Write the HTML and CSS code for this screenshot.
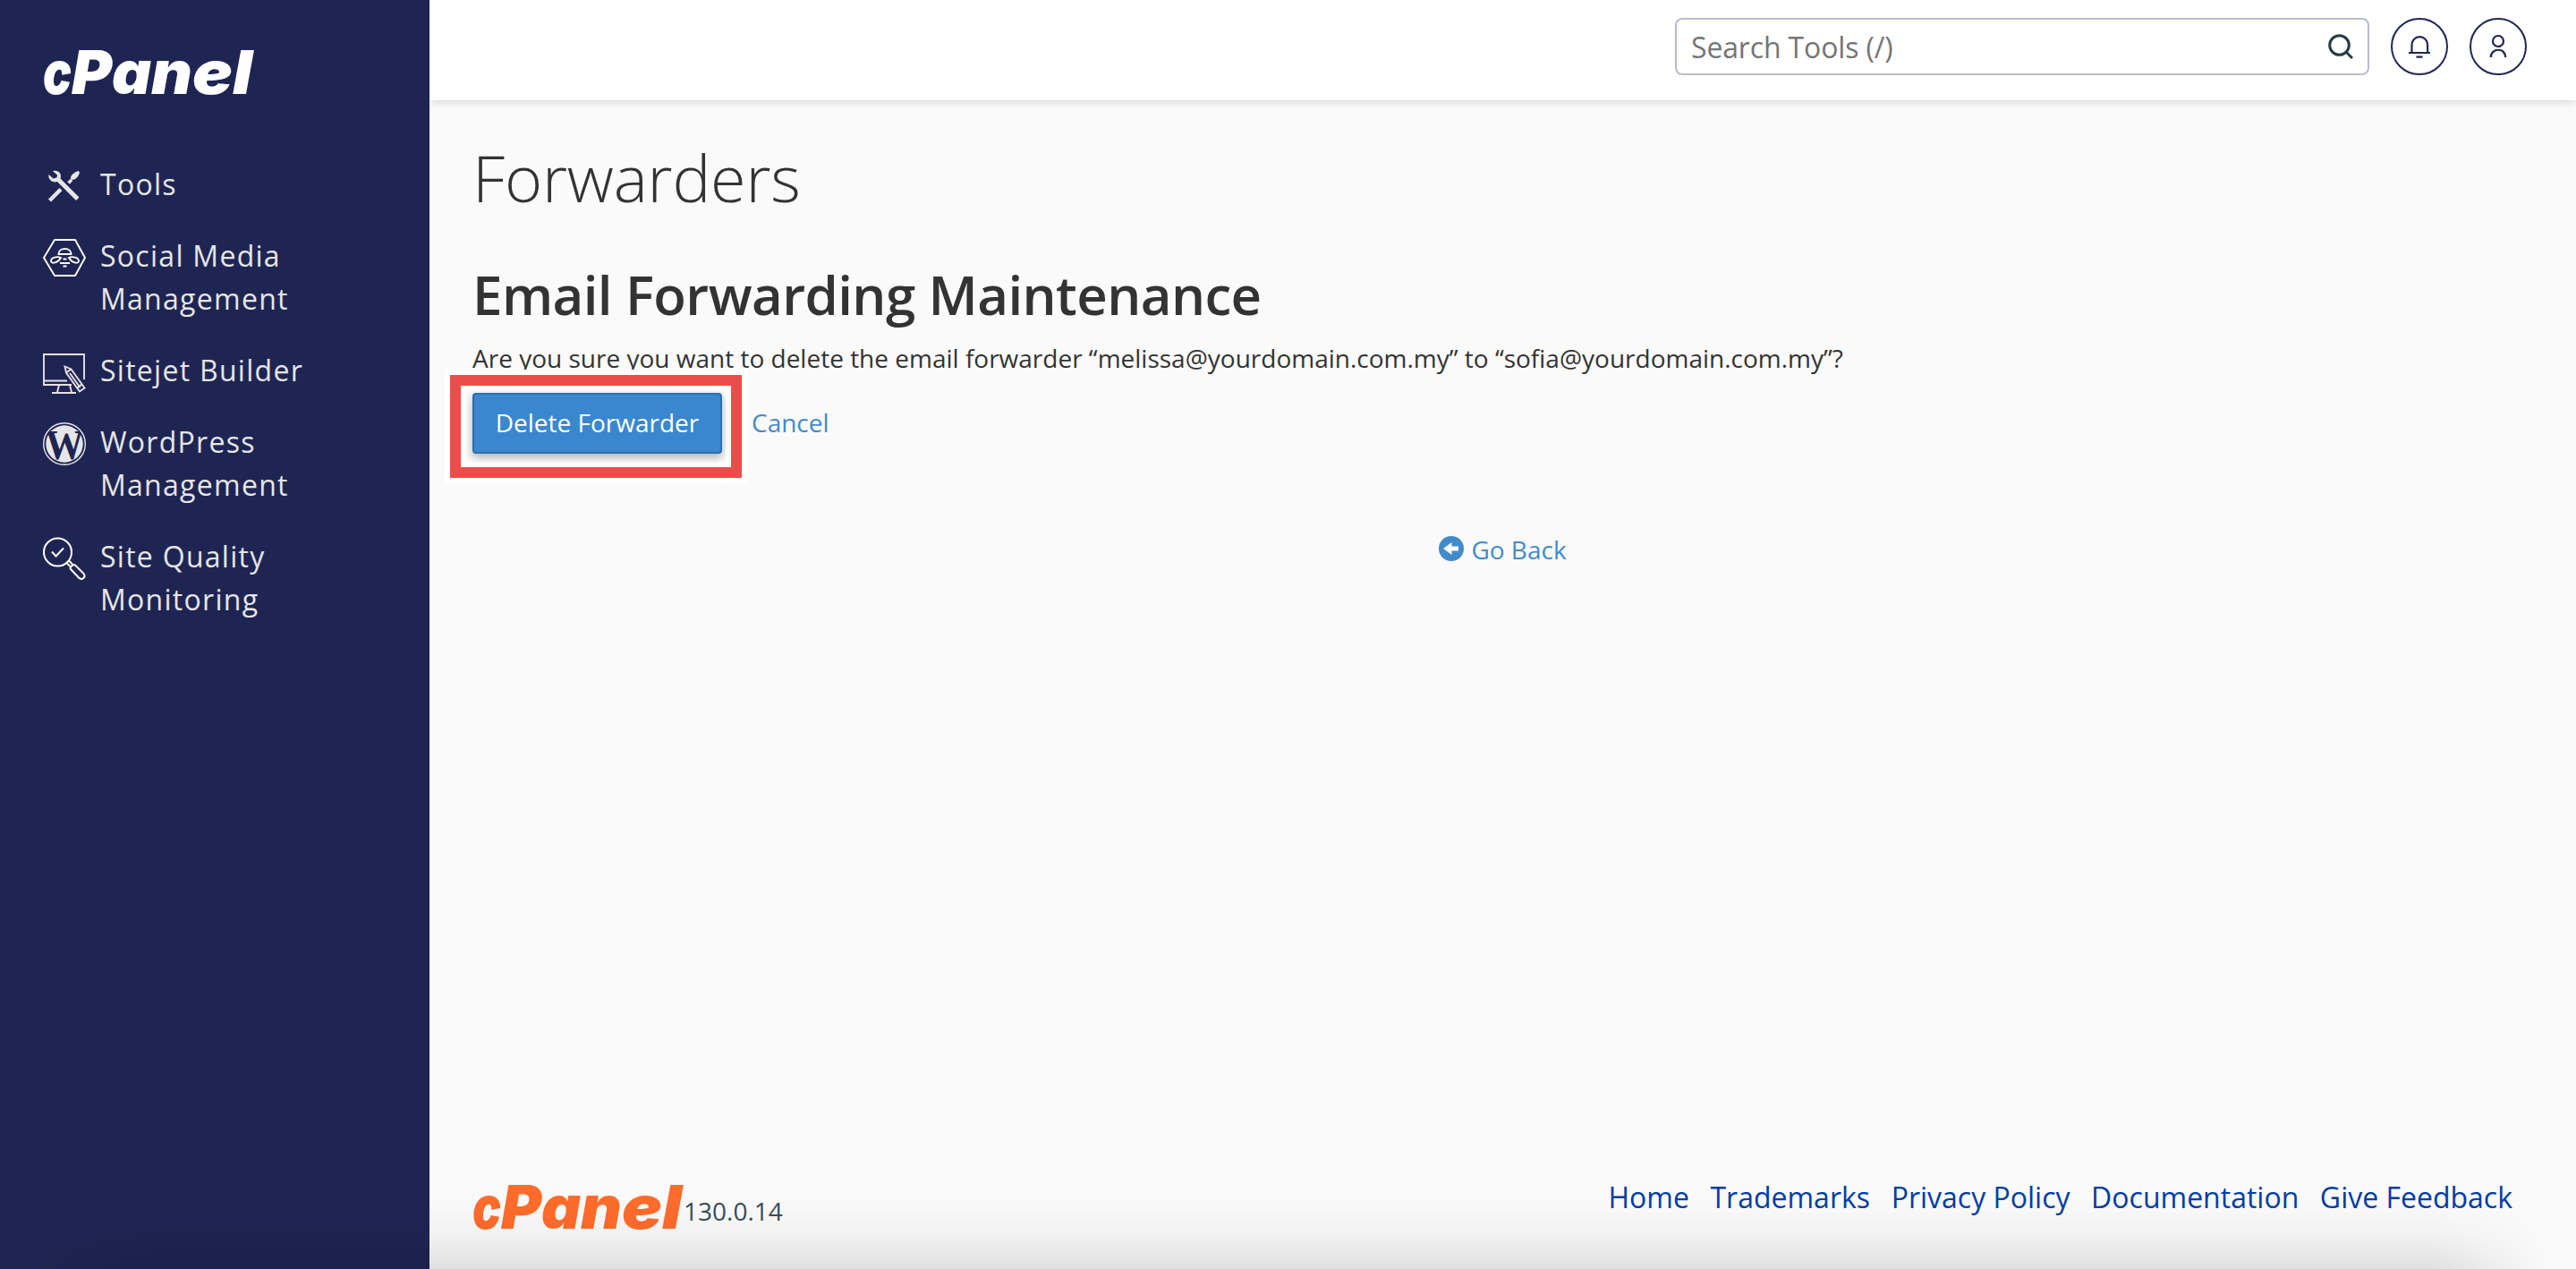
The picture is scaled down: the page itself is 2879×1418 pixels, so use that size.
FILE: index.html
```
<!DOCTYPE html>
<html lang="en">
<head>
  <meta charset="UTF-8" />
  <title>cPanel - Forwarders</title>
  <link rel="stylesheet" href="styles.css">
</head>
<body>

  <aside class="sidebar">
    <svg class="logo" viewBox="0 0 240 52">
      <text x="0" y="50" textLength="32" lengthAdjust="spacingAndGlyphs">c</text>
      <text x="32" y="50" textLength="45" lengthAdjust="spacingAndGlyphs">P</text>
      <text x="77" y="50" textLength="44" lengthAdjust="spacingAndGlyphs">a</text>
      <text x="121" y="50" textLength="46" lengthAdjust="spacingAndGlyphs">n</text>
      <text x="167" y="50" textLength="45" lengthAdjust="spacingAndGlyphs">e</text>
      <text x="212" y="50" textLength="22" lengthAdjust="spacingAndGlyphs">l</text>
    </svg>

    <nav class="nav">
      <a class="nav-item" href="#">
        <svg class="nav-icon" viewBox="0 0 48 48">
          <path d="M11 7.200C14 6 18 7 19.500 10.500c.8 2 .5 3.500 0 5L40.500 36.500l-3.500 3.500L16 19c-2.500 1-5.500.5-7.500-1.500C6.500 15.500 6 13.500 6.500 11l5 4.500 4-1 .5-3z" fill="#e6e6e8" />
          <path d="M28.500 20.500L32 17" stroke="#e6e6e8" stroke-width="3.500" />
          <path d="M31 16c-.5-4 3-7 8.500-9l1.500 1.500c-1.500 5.500-4.500 8.500-9 8.500z" fill="#e6e6e8" />
          <path d="M7.500 40L20 27.500" stroke="#e6e6e8" stroke-width="4.500" />
        </svg>
        <span>Tools</span>
      </a>
      <a class="nav-item" href="#">
        <svg class="nav-icon" viewBox="0 0 48 48" fill="none" stroke="#fff" stroke-width="1.900">
          <path d="M13 4h23l11 20-11 20H13L1 24z" stroke-linejoin="round" />
          <path d="M17.500 20c0-8 14-8 14 0z" />
          <path d="M20 24c-4-2-11 0-11 3.500 0 4 8 2 11-3.500zM29 24c4-2 11 0 11 3.500 0 4-8 2-11-3.500z" />
          <path d="M22.500 25.500h4M19 30h11M22.500 33.500h4" />
        </svg>
        <span>Social Media Management</span>
      </a>
      <a class="nav-item" href="#">
        <svg class="nav-icon" viewBox="0 0 48 48" fill="none" stroke="#e6e0ea" stroke-width="1.900">
          <path d="M46 32V4H1v34h31M1 33.500h26" />
          <path d="M18 38l-2 8.500M30 38l2 8.500M10 47h27" />
          <path d="M24.500 17.500l7 3 15 21-5.500 4-15-21zM26 24.500l5.500-4M37.500 42l6-4.500M30 25l11.500 16" />
        </svg>
        <span>Sitejet Builder</span>
      </a>
      <a class="nav-item" href="#">
        <svg class="nav-icon" viewBox="0 0 48 48">
          <circle cx="24" cy="24" r="20.700" fill="#e6e6e8" />
          <text class="wp-mark" x="2.500" y="41" textLength="43" lengthAdjust="spacingAndGlyphs">W</text>
          <circle cx="24" cy="24" r="23.300" fill="none" stroke="#e6e6e8" stroke-width="1.400" />
        </svg>
        <span>WordPress Management</span>
      </a>
      <a class="nav-item" href="#">
        <svg class="nav-icon" viewBox="0 0 48 48" fill="none" stroke="#fff" stroke-width="2">
          <circle cx="16.500" cy="17" r="15.500" />
          <path d="M10 16.500l4.500 5 8.500-9M26.500 29l4 4M29 26.500l4 4" />
          <path d="M31 36c-1.500-2 2.500-6 5-4.500l9.500 9.500c3 4-2 8-5.500 4.500z" />
        </svg>
        <span>Site Quality Monitoring</span>
      </a>
    </nav>
  </aside>

  <div class="page">
    <header class="topbar">
      <div class="search">
        <input class="search-input" type="text" placeholder="Search Tools (/)" />
        <svg class="search-icon" viewBox="0 0 28 28" fill="none" stroke="#243c47" stroke-width="3">
          <circle cx="12.500" cy="12.500" r="10.800" />
          <path d="M19.500 19.500l7.500 7.500" />
        </svg>
      </div>
      <a class="round-btn" href="#">
        <svg class="round-icon" viewBox="0 0 64 64">
          <path d="M23.500 38.500V30a8.800 8.800 0 0 1 17.600 0v8.500M20 39h24M28.500 43.700h7" />
        </svg>
      </a>
      <a class="round-btn" href="#">
        <svg class="round-icon" viewBox="0 0 64 64">
          <circle cx="32" cy="26" r="6" />
          <path d="M23.800 44c0-11 16.400-11 16.400 0" />
        </svg>
      </a>
    </header>

    <main class="content">
      <h1 class="page-title">Forwarders</h1>
      <h2 class="section-title">Email Forwarding Maintenance</h2>
      <p class="question">Are you sure you want to delete the email forwarder “melissa@yourdomain.com.my” to “sofia@yourdomain.com.my”?</p>
      <div class="actions">
        <div class="highlight">
          <button class="btn-primary" type="button">Delete Forwarder</button>
        </div>
        <a class="link" href="#">Cancel</a>
      </div>
      <a class="link go-back" href="#">
        <svg class="back-icon" viewBox="0 0 28 28">
          <circle cx="14" cy="14" r="14" fill="#428bca" />
          <path d="M5 14l9.500-7v4.500H22v5h-7.500V21z" fill="#fafafa" />
        </svg>
        <span>Go Back</span>
      </a>
    </main>

    <footer class="footer">
      <div class="brand">
        <svg class="logo logo-orange" viewBox="0 0 240 52">
          <text x="0" y="50" textLength="32" lengthAdjust="spacingAndGlyphs">c</text>
          <text x="32" y="50" textLength="45" lengthAdjust="spacingAndGlyphs">P</text>
          <text x="77" y="50" textLength="44" lengthAdjust="spacingAndGlyphs">a</text>
          <text x="121" y="50" textLength="46" lengthAdjust="spacingAndGlyphs">n</text>
          <text x="167" y="50" textLength="45" lengthAdjust="spacingAndGlyphs">e</text>
          <text x="212" y="50" textLength="22" lengthAdjust="spacingAndGlyphs">l</text>
        </svg>
        <span class="version">130.0.14</span>
      </div>
      <div class="footer-links">
        <a href="#">Home</a>
        <a href="#">Trademarks</a>
        <a href="#">Privacy Policy</a>
        <a href="#">Documentation</a>
        <a href="#">Give Feedback</a>
      </div>
    </footer>
  </div>

</body>
</html>
```

FILE: styles.css
```
* {
  box-sizing: border-box;
}

body {
  margin: 0;
  display: flex;
  height: 1418px;
  overflow: hidden;
  font-family: "Open Sans", sans-serif;
  font-size: 28px;
  color: #333;
  background: #fafafa;
}

/* soft shade along the bottom edge of the window */
body::after {
  content: "";
  position: absolute;
  left: 0;
  right: 0;
  bottom: 0;
  height: 80px;
  background: linear-gradient(transparent, rgba(0, 0, 0, 0.03) 50%, rgba(0, 0, 0, 0.1));
  mask-image: linear-gradient(to right, transparent, #000 180px, #000 calc(100% - 160px), transparent calc(100% - 30px));
  pointer-events: none;
}

a {
  text-decoration: none;
}

/* sidebar */
.sidebar {
  width: 480px;
  flex-shrink: 0;
  padding: 55px 48px 0;
  background: #1f2553;
}

.logo {
  display: block;
  width: 240px;
  height: 52px;
  overflow: visible;
  font-family: Inter, sans-serif;
  font-size: 67px;
  font-weight: 900;
  font-style: italic;
  fill: #fff;
}

.logo-orange {
  fill: #ff6c2c;
}

.nav {
  display: flex;
  flex-direction: column;
  gap: 32px;
  margin-top: 75px;
}

.nav-item {
  display: flex;
  gap: 16px;
  width: 320px;
  font-size: 32px;
  line-height: 48px;
  letter-spacing: 1.28px;
  color: #e6e6e8;
}

.nav-icon {
  width: 48px;
  height: 48px;
  margin: 2px 0 -2px;
  flex-shrink: 0;
  overflow: visible;
}

.wp-mark {
  font-family: "Liberation Serif", serif;
  font-size: 46px;
  font-weight: bold;
  letter-spacing: 0;
  fill: #1f2553;
}

/* main column */
.page {
  flex: 1;
  display: flex;
  flex-direction: column;
}

.topbar {
  display: flex;
  justify-content: flex-end;
  gap: 24px;
  height: 112px;
  padding: 20px 55px 0 0;
  background: #fff;
  box-shadow: 0 2px 10px rgba(0, 0, 0, 0.14);
}

.search {
  display: flex;
  align-items: center;
  width: 776px;
  height: 64px;
  padding: 0 16px;
  border: 2px solid #b9bccf;
  border-radius: 8px;
}

.search-input {
  flex: 1;
  padding: 0;
  border: none;
  outline: none;
  font-family: inherit;
  font-size: 32px;
  letter-spacing: -0.15px;
  background: none;
}

.search-input::placeholder {
  color: #757575;
}

.search-icon {
  width: 28px;
  height: 28px;
}

.round-btn {
  width: 64px;
  height: 64px;
  border: 2px solid #1f2553;
  border-radius: 50%;
}

.round-icon {
  display: block;
  width: 64px;
  height: 64px;
  margin: -2px;
  fill: none;
  stroke: #1f2553;
  stroke-width: 2.2;
}

.content {
  flex: 1;
  padding: 46px 48px 0;
}

.page-title {
  margin: 0;
  font-size: 72px;
  font-weight: 300;
  line-height: 80px;
  letter-spacing: -0.2px;
}

.section-title {
  margin: 58px 0 0;
  font-size: 60px;
  font-weight: 600;
  line-height: 66px;
  letter-spacing: -0.6px;
}

.question {
  margin: 18px 0 0;
  line-height: 40px;
}

.actions {
  display: flex;
  align-items: baseline;
  gap: 5px;
  margin: -7px 0 0 -31px;
}

/* red frame with a white edge on both sides */
.highlight {
  position: relative;
  padding: 2px 4px 9px 7px;
  border: 6px solid #fff;
  outline: 12px solid #ec4d4b;
  margin: 18px;
  box-shadow: 0 0 0 18px #fff;
}

.btn-primary {
  display: block;
  width: 279px;
  height: 68px;
  padding: 0 0 2px;
  border: 2px solid #2a6fae;
  border-radius: 4px;
  font-family: inherit;
  font-size: 28px;
  color: #fff;
  background: #3a87d0;
  box-shadow: 0 4px 10px rgba(0, 0, 0, 0.3);
}

.link {
  color: #428bca;
}

.go-back {
  display: flex;
  justify-content: center;
  align-items: center;
  gap: 8px;
  margin-top: 55px;
}

.back-icon {
  width: 28px;
  height: 28px;
  margin-top: -2px;
}

.footer {
  display: flex;
  justify-content: space-between;
  height: 106px;
  padding: 0 71px 0 48px;
}

.brand {
  display: flex;
  padding-top: 11px;
}

.version {
  margin-left: -4px;
  padding-top: 10px;
  line-height: 40px;
  color: #3b4d5c;
}

.footer-links {
  display: flex;
  gap: 23.6px;
  padding-top: 2px;
  font-size: 32px;
  line-height: 48px;
}

.footer-links a {
  color: #003da6;
}
```
